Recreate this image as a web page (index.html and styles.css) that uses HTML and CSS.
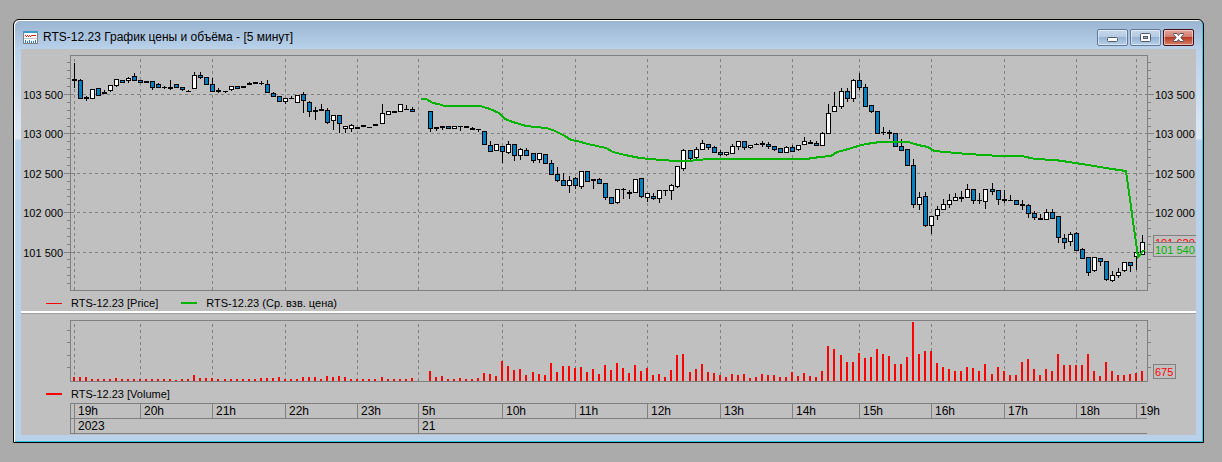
FILE: index.html
```html
<!DOCTYPE html>
<html lang="ru">
<head>
    <meta charset="UTF-8">
    <meta name="viewport" content="width=device-width, initial-scale=1.0">
    <title>RTS-12.23 График цены и объёма</title>
    <link rel="stylesheet" href="styles.css">
</head>
<body>
    <div class="window">
        <header class="titlebar">
            <svg class="app-icon" width="15" height="13" viewBox="0 0 15 13" shape-rendering="crispEdges">
                <rect width="15" height="13" fill="#808080"/>
                <rect x="1" y="2" width="13" height="10" fill="#fff"/>
                <rect width="15" height="2" fill="#3d9bc8"/>
                <path d="M2 4h1v1h1v-1h1v1h1v-1h1v1h1v-1h5v1h-5v1h-1v-1h-1v1h-1v-1h-1v1h-1v-1h-1z" fill="#d02020"/>
                <path d="M1 7.500h13" stroke="#c8c8c8"/>
                <path d="M2.500 9v3M4.500 10v2M6.500 9v3M8.500 10v2M10.500 10v2M12.500 9v3" stroke="#2a7ac8"/>
            </svg>
            <h1 class="title">RTS-12.23 График цены и объёма - [5 минут]</h1>
            <div class="buttons">
                <button class="win-button" aria-label="Свернуть">
                    <svg width="29" height="15" viewBox="0 0 29 15">
                        <rect x="9.5" y="7.5" width="10" height="4" rx="1" fill="#fff" stroke="#535666"/>
                    </svg>
                </button>
                <button class="win-button" aria-label="Развернуть">
                    <svg width="29" height="15" viewBox="0 0 29 15">
                        <rect x="9.5" y="3.5" width="10" height="8" rx="1" fill="#fff" stroke="#535666"/>
                        <rect x="12.5" y="6.5" width="4" height="2" fill="#9db8d6" stroke="#535666"/>
                    </svg>
                </button>
                <button class="win-button close" aria-label="Закрыть">
                    <svg width="29" height="15" viewBox="0 0 29 15">
                        <path d="M9.500 3.500h3.500l1.500 2 1.500-2h3.500v1l-2.700 3 2.700 3v1h-3.500l-1.500-2-1.500 2h-3.500v-1l2.700-3-2.700-3z" fill="#fff" stroke="#535666"/>
                    </svg>
                </button>
            </div>
        </header>

        <main class="client">
            <section class="panel">
                <svg class="chart" id="price" height="242"></svg>
                <ul class="legend">
                    <li class="legend-item"><span class="line thin"></span>RTS-12.23 [Price]</li>
                    <li class="legend-item"><span class="line green"></span>RTS-12.23 (Ср. взв. цена)</li>
                </ul>
            </section>
            <div class="splitter"></div>
            <section class="panel">
                <svg class="chart" id="volume" height="68"></svg>
                <ul class="legend">
                    <li class="legend-item"><span class="line"></span>RTS-12.23 [Volume]</li>
                </ul>
            </section>
            <div class="time-axis">
                <div class="axis-row" id="hours"></div>
                <div class="axis-row" id="days"></div>
            </div>
        </main>
    </div>
    <script src="script.js"></script>
</body>
</html>
```
FILE: styles.css
```css
* {
    box-sizing: border-box;
}

body {
    margin: 0;
    padding: 19px 18px 19px 13px;
    background: #ababab;
    color: #000;
    font-family: "Liberation Sans", Arial, sans-serif;
    font-size: 11px;
}

.window {
    border: 1px solid #000;
    border-radius: 6px 6px 0 0;
    padding: 0 7px 7px;
    background: linear-gradient(to bottom, #99b4d1 0, #b9d1ea 29px, #dfe9f5 119px, #b9d1ea 120px);
    box-shadow: inset 1px 1px 0 #fff, inset -1px -1px 0 #35c5e5;
}

.titlebar {
    display: flex;
    align-items: center;
    height: 29px;
    padding: 5px 2px 0;
}

.app-icon {
    flex: none;
    margin-right: 5px;
}

.title {
    flex: 1;
    margin: 0;
    font-size: 12px;
    font-weight: normal;
    white-space: nowrap;
}

.buttons {
    display: flex;
    gap: 2px;
}

.win-button {
    width: 31px;
    height: 17px;
    padding: 0;
    border: 1px solid #5f7799;
    border-radius: 2px;
    background: linear-gradient(to bottom, #c5d7eb 0, #b4cae2 50%, #97b4d3 50%, #b5cfe9 100%);
    box-shadow: inset 0 0 0 1px rgba(255, 255, 255, 0.5);
}

.win-button svg {
    display: block;
}

.win-button.close {
    border-color: #43101a;
    background: linear-gradient(to bottom, #e2a397 0, #d07a6c 50%, #b93a25 50%, #d4806a 100%);
}

.client {
    padding-bottom: 1px;
    background: #c0c0c0;
}

.chart {
    display: block;
    width: 100%;
}

.chart text {
    font-family: "Liberation Sans", Arial, sans-serif;
    font-size: 11px;
}

.legend {
    display: flex;
    align-items: center;
    gap: 23px;
    height: 21px;
    margin: 0;
    padding: 3px 0 0 25px;
    list-style: none;
    line-height: 18px;
    white-space: nowrap;
}

.legend-item {
    display: flex;
    align-items: center;
}

.line {
    width: 16px;
    height: 2px;
    margin-right: 9px;
    background: #f00;
}

.line.thin {
    height: 1px;
}

.line.green {
    background: #00b400;
}

.splitter {
    height: 3px;
    margin-top: -1px;
    border-top: 2px solid #fff;
    background: #a0a0a0;
}

.time-axis {
    margin: 0 49px;
    border-left: 1px solid #808080;
    border-bottom: 1px solid #808080;
}

.axis-row {
    display: flex;
    height: 15px;
    border-top: 1px solid #808080;
    line-height: 14px;
}

.axis-cell {
    min-width: 0;
    padding-left: 3px;
    border-left: 1px solid #808080;
    font-size: 12px;
    white-space: nowrap;
}

.axis-cell.blank {
    padding: 0;
    border: none;
}
```
FILE: script.js
```js
const NS = 'http://www.w3.org/2000/svg';
const LEFT = 70;
const BASE_WIDTH = 1077;
const GREY = '#808080';
const BLUE = '#0080c0';
const GREEN = '#00b400';

// bar number (5 minutes each) where every hour starts
const hours = [
    ['19h', 0], ['20h', 11], ['21h', 23], ['22h', 35], ['23h', 47], ['5h', 57], ['10h', 71], ['11h', 83],
    ['12h', 95], ['13h', 107], ['14h', 119], ['15h', 130], ['16h', 142], ['17h', 154], ['18h', 166], ['19h', 176]
];

const priceLevels = [['103 500', 94], ['103 000', 133], ['102 500', 173], ['102 000', 212], ['101 500', 252]];

// high, body top, body bottom, low, type (w - up, b - down, d - no change)
const evening = `
63 79 80 87 d|79 80 98 98 b|96 97 98 100 d|89 89 98 98 w|88 88 95 95 b|90 92 93 93 d|85 85 90 91 w|79 79 85 86 w
80 80 82 82 b|77 78 80 82 w|73 76 80 80 b|80 80 82 82 b|81 81 82 82 d|81 81 87 89 b|83 84 87 87 b|86 87 87 88 d
80 87 88 89 d|84 84 87 87 b|87 87 89 90 b|90 91 91 91 d|72 75 88 88 w|72 75 77 78 b|77 77 84 84 b|78 84 91 91 b
88 90 91 92 d|91 91 91 92 d|86 86 89 90 w|86 86 88 88 b|86 86 87 87 d|82 83 84 84 d|82 82 83 83 d|81 83 83 84 d
80 84 92 92 b|92 93 96 96 b|96 96 101 101 b|98 98 101 103 w|96 98 98 98 d|95 95 102 102 w|92 94 100 112 b|101 102 111 116 b
107 110 111 119 d|104 109 110 110 d|108 110 122 123 b|115 115 120 129 w|115 115 123 132 b|126 126 128 132 w|124 125 128 131 w|127 127 128 128 d
125 125 126 126 d|127 127 127 127 d|124 124 125 125 d|104 113 123 123 w|111 111 114 114 w|111 111 112 112 d|104 104 111 111 w|105 109 109 109 d
107 109 111 111 b`;

const day = `
111 111 128 131 b|127 127 128 130 d|126 126 127 129 d|126 126 128 128 b|126 126 128 128 w|126 126 126 130 d|126 126 127 127 d|127 128 129 129 d
129 129 129 131 d|131 131 144 144 b|141 145 151 151 b|144 144 150 150 w|146 146 151 162 b|141 144 152 153 w|144 144 155 160 b|148 149 155 159 w
148 150 155 155 b|153 153 160 162 b|153 153 159 162 w|154 154 163 163 b|160 163 174 174 b|167 174 180 181 b|173 180 185 185 b|176 180 185 192 w
177 178 185 188 b|171 171 186 188 w|171 171 181 181 b|179 179 180 188 d|178 179 183 183 b|183 183 197 199 b|197 197 203 203 b|189 189 202 203 w
188 189 189 198 d|190 192 193 198 d|179 179 192 192 w|178 178 196 197 b|193 193 197 201 w|193 196 198 199 b|190 190 198 202 w|190 190 190 195 d
184 185 190 199 w|166 166 186 187 w|149 150 168 170 w|150 150 158 159 b|147 149 157 158 w|140 143 149 149 w|144 144 147 149 b|146 147 152 152 b
150 152 154 155 b|152 152 154 155 w|144 146 153 153 w|141 141 146 149 w|141 141 147 149 b|145 145 147 148 w|143 144 144 144 d|141 143 144 146 d
142 144 146 148 b|146 146 149 150 b|148 148 152 152 b|146 147 152 152 w|145 147 151 151 b|145 145 149 150 w|137 141 144 144 w|140 142 143 143 d
141 143 145 145 b|132 133 145 145 w|104 113 133 133 w|92 106 111 111 w|88 91 106 108 w|88 91 98 101 b|79 80 98 101 w|73 80 87 89 b
84 87 106 106 b|105 105 111 112 b|111 111 133 133 b|127 132 132 134 d|130 132 133 138 d|133 133 146 146 b|139 146 150 150 b|149 149 165 165 b
159 165 204 207 b|192 197 204 209 w|192 196 225 226 b|216 216 225 233 w|206 209 215 219 w|199 204 209 209 w|194 200 204 207 w|193 197 200 200 w
191 197 198 201 d|184 189 197 197 w|189 189 200 203 b|193 200 200 203 d|189 189 201 208 w|183 189 191 194 b|190 190 199 204 b|190 199 200 202 d
195 200 200 200 d|200 200 204 204 b|200 204 205 209 d|204 205 213 217 b|211 213 217 219 b|214 218 219 219 d|209 212 219 219 w|209 212 218 218 b
216 216 237 242 b|234 238 242 248 b|232 234 241 245 w|232 233 250 250 b|248 249 258 258 b|257 257 272 275 b|257 257 270 271 w|258 258 261 265 b
261 261 279 280 b|271 275 280 281 w|268 272 275 277 w|262 262 270 271 w|262 262 265 271 b|250 252 256 269 w|235 242 254 254 w`;

const eveningVolume = [
    4, 4, 4, 2, 2, 2, 2, 3, 2, 2, 2, 2, 2, 2, 2, 2, 2, 1, 2, 2, 6, 3, 3, 3, 2, 2, 2, 2, 2, 2,
    2, 3, 3, 3, 4, 2, 2, 2, 4, 4, 4, 2, 5, 4, 5, 4, 2, 2, 2, 2, 2, 4, 2, 2, 2, 2, 3
];
const dayVolume = [
    10, 4, 5, 2, 2, 3, 2, 2, 3, 8, 7, 5, 20, 15, 11, 12, 6, 9, 7, 6, 18, 9, 15, 15, 13, 14, 9, 12, 7, 16,
    11, 18, 13, 8, 16, 10, 13, 6, 7, 4, 11, 26, 27, 9, 12, 17, 9, 8, 6, 4, 7, 6, 7, 3, 4, 7, 6, 6, 4, 4,
    9, 5, 8, 5, 4, 10, 35, 32, 26, 19, 19, 28, 23, 24, 32, 27, 25, 17, 17, 24, 59, 27, 30, 30, 18, 14, 12, 10, 10, 14,
    13, 10, 17, 7, 14, 10, 6, 6, 19, 22, 12, 6, 12, 10, 27, 16, 16, 16, 16, 27, 10, 5, 19, 10, 6, 6, 7, 8, 10
];

const average = [
    [421, 99], [426, 99], [433, 103], [438, 104], [445, 106], [480, 106], [490, 109], [499, 113], [505, 119],
    [513, 122], [526, 126], [546, 128], [553, 130], [565, 136], [571, 140], [577, 141], [588, 144], [606, 148],
    [613, 152], [625, 155], [640, 158], [650, 159], [675, 161], [690, 161], [696, 160], [711, 159], [806, 159],
    [820, 157], [831, 156], [837, 152], [845, 150], [858, 146], [866, 144], [880, 142], [908, 142], [918, 145],
    [928, 147], [934, 151], [968, 154], [1000, 156], [1022, 156], [1035, 159], [1055, 160], [1069, 162],
    [1088, 165], [1112, 169], [1126, 171], [1138, 257], [1144, 250]
];

const priceSvg = document.getElementById('price');
const volumeSvg = document.getElementById('volume');
let scale = 1;
let right = LEFT + BASE_WIDTH;

function add(parent, name, attrs, text) {
    const el = document.createElementNS(NS, name);
    for (const key in attrs) el.setAttribute(key, attrs[key]);
    if (text) el.textContent = text;
    parent.appendChild(el);
    return el;
}

function rect(svg, x, y, width, height, fill) {
    add(svg, 'rect', { x, y, width, height, fill });
}

function scaleX(x) {
    return LEFT + (x - LEFT) * scale;
}

// the night gap takes two bars
function barX(i) {
    return Math.floor(scaleX(74.016 + i * 6.0394));
}

function hourX(i) {
    return i === 57 ? Math.floor(scaleX(418)) : barX(i);
}

function dashed(svg, x1, y1, x2, y2) {
    add(svg, 'line', { x1, y1, x2, y2, stroke: GREY, 'stroke-dasharray': '3 3' });
}

function frame(svg, top, bottom, gridTop) {
    hours.forEach(([, i]) => dashed(svg, hourX(i) + 0.5, gridTop, hourX(i) + 0.5, bottom));
    add(svg, 'rect', {
        x: LEFT + 0.5, y: top + 0.5, width: right - LEFT, height: bottom - top, fill: 'none', stroke: GREY
    });
}

function ticks(svg, y, size) {
    rect(svg, LEFT - size, y, size, 1, GREY);
    rect(svg, right + 1, y, size, 1, GREY);
}

function tag(svg, y, text, color, width) {
    add(svg, 'rect', { x: right + 6.5, y: y + 0.5, width, height: 14, fill: '#c0c0c0', stroke: GREY });
    add(svg, 'text', { x: right + 8, y: y + 12, fill: color }, text);
}

function drawCandles(svg, source, first) {
    source.trim().split(/[|\n]/).forEach((item, n) => {
        const [high, top, bottom, low, type] = item.split(' ');
        const x = barX(first + n);
        rect(svg, x, +high, 1, low - high + 1, '#000');
        rect(svg, x - 2, +top, 5, bottom - top + 1, '#000');
        if (type !== 'd') rect(svg, x - 1, +top + 1, 3, bottom - top - 1, type === 'w' ? '#fff' : BLUE);
    });
}

function drawVolume(svg, values, first) {
    values.forEach((v, n) => rect(svg, barX(first + n) - 1, 381 - v, 2, v, '#f00'));
}

function reset(svg, y, height) {
    svg.textContent = '';
    svg.setAttribute('viewBox', `21 ${y} ${svg.clientWidth} ${height}`);
    svg.setAttribute('shape-rendering', 'crispEdges');
}

function axis(id, marks) {
    const row = document.getElementById(id);
    row.textContent = '';
    let from = LEFT + 1;
    marks.concat([['', right]]).forEach(([, x], n) => {
        const cell = document.createElement('div');
        cell.className = n ? 'axis-cell' : 'axis-cell blank';
        cell.textContent = n ? marks[n - 1][0] : '';
        cell.style.flex = `0 0 ${x - from}px`;
        row.appendChild(cell);
        from = x;
    });
}

function draw() {
    right = LEFT + priceSvg.clientWidth - 98;
    scale = (right - LEFT) / BASE_WIDTH;

    reset(priceSvg, 49, 242);
    priceLevels.forEach(([, y]) => dashed(priceSvg, LEFT + 1, y + 0.5, right, y + 0.5));
    frame(priceSvg, 55, 290, 59);
    for (let k = -4; k <= 24; k++) {
        ticks(priceSvg, Math.round(94 + k * 7.88), k % 5 ? 3 : 6);
    }
    priceLevels.forEach(([text, y]) => {
        add(priceSvg, 'text', { x: 63, y: y + 5, 'text-anchor': 'end' }, text);
        if (y !== 252) add(priceSvg, 'text', { x: right + 8, y: y + 5 }, text);
    });
    drawCandles(priceSvg, evening, 0);
    drawCandles(priceSvg, day, 59);
    add(priceSvg, 'polyline', {
        points: average.map(([x, y]) => scaleX(x) + ',' + y).join(' '),
        fill: 'none', stroke: GREEN, 'stroke-width': 2
    });
    tag(priceSvg, 235, '101 620', '#f00', 50);
    tag(priceSvg, 242, '101 540', GREEN, 50);

    reset(volumeSvg, 314, 68);
    frame(volumeSvg, 320, 381, 324);
    [330, 342, 355, 367].forEach(y => ticks(volumeSvg, y, 3));
    drawVolume(volumeSvg, eveningVolume, 0);
    drawVolume(volumeSvg, dayVolume, 59);
    tag(volumeSvg, 364, '675', '#f00', 22);

    axis('hours', hours.map(([text, i]) => [text, hourX(i)]));
    axis('days', [['2023', hourX(0)], ['21', hourX(57)]]);
}

draw();
window.addEventListener('resize', draw);
```
